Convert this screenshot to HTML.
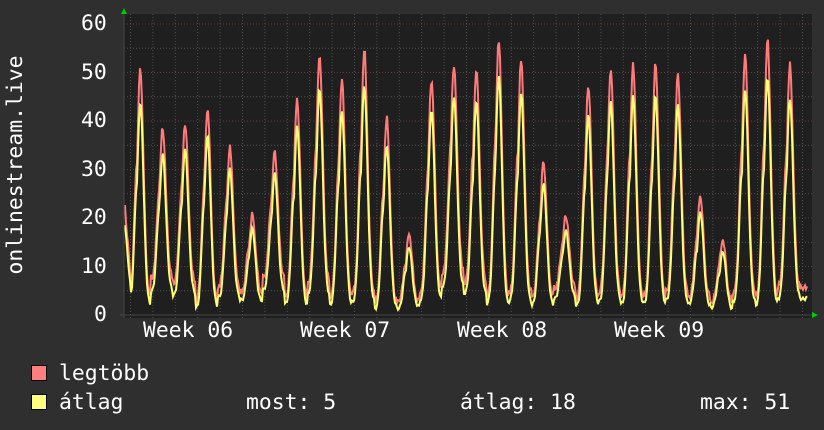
<!DOCTYPE html>
<html><head><meta charset="utf-8"><style>
html,body{margin:0;padding:0;background:#2f2f2f;}
body{width:824px;height:430px;overflow:hidden;position:relative;font-family:"DejaVu Sans Mono","Liberation Mono",monospace;color:#fff;}
.t{position:absolute;font-size:21.4px;line-height:22px;white-space:pre;}
.sq{position:absolute;width:14px;height:14px;border:1px solid #000;}
</style></head><body>
<svg id="g" width="824" height="430" style="position:absolute;left:0;top:0">
<rect x="124" y="14" width="688" height="304" fill="#1f1f1f"/>
<g id="grid"></g>
<polyline id="red" fill="none" stroke="#ff7b7b" stroke-width="2"/>
<polyline id="yel" fill="none" stroke="#ffff70" stroke-width="2"/>
<line x1="124" y1="10" x2="124" y2="318" stroke="#444" stroke-width="1"/>
<line x1="120" y1="315" x2="814" y2="315" stroke="#444" stroke-width="1"/>
<polygon points="121,14 127,14 124,8" fill="#0c0"/>
<polygon points="812,312 812,318 818,315" fill="#0c0"/>
</svg>
<div class="t" style="left:81px;top:13px">60</div>
<div class="t" style="left:81px;top:62px">50</div>
<div class="t" style="left:81px;top:110px">40</div>
<div class="t" style="left:81px;top:159px">30</div>
<div class="t" style="left:81px;top:207px">20</div>
<div class="t" style="left:81px;top:256px">10</div>
<div class="t" style="left:94px;top:304px">0</div>
<div class="t" style="left:-99px;top:154px;transform:rotate(-90deg);width:230px;text-align:center">onlinestream.live</div>
<div class="t" style="left:143px;top:320px">Week 06</div>
<div class="t" style="left:300px;top:320px">Week 07</div>
<div class="t" style="left:457px;top:320px">Week 08</div>
<div class="t" style="left:614px;top:320px">Week 09</div>
<div class="sq" style="left:31px;top:365px;background:#ff7f7f"></div>
<div class="sq" style="left:31px;top:394px;background:#ffff7f"></div>
<div class="t" style="left:59px;top:363px">legtöbb</div>
<div class="t" style="left:59px;top:392px">átlag</div>
<div class="t" style="left:246px;top:392px">most: 5</div>
<div class="t" style="left:460px;top:392px">átlag: 18</div>
<div class="t" style="left:700px;top:392px">max: 51</div>
<script>
var NS="http://www.w3.org/2000/svg",g=document.getElementById("grid");
function ln(x1,y1,x2,y2,c){var l=document.createElementNS(NS,"line");l.setAttribute("x1",x1);l.setAttribute("y1",y1);l.setAttribute("x2",x2);l.setAttribute("y2",y2);l.setAttribute("stroke",c);l.setAttribute("stroke-dasharray","1,2");g.appendChild(l);}
function Y(v){return 315-v*4.85;}
for(var v=5;v<=60;v+=5){ln(124,Y(v),812,Y(v),v%10?"#505050":"#6a3a3a");}
for(var x=130.5;x<812;x+=22.4){ln(x,14,x,318,"#505050");}
var peaks=[50,38,39,42,34,20,33,44,53,48,54,40,16,48,51,50,56,52,31,20,47,50,51,51,49,24,15,53,56,51];
var mins=[3,7,6,2,5,4,7,3,6,3,4,2,2,4,8,6,3,4,3,5,3,4,3,3,4,3,2,4,3,5];
var r=[],y=[];
for(var x=125;x<=807;x++){
 var d=(x-128)/22.4, i=Math.floor(d), ph=d-i, k;
 if(i<0){i=0;ph=0;}
 var p,m;
 if(i>=peaks.length){p=5;m=5;k=0;}
 else{
 p=peaks[i];m=mins[i];
 var f=Math.exp(-Math.pow((ph-0.55)/0.2,2));
 var s=0.6*Math.exp(-Math.pow((ph-0.4)/0.16,2));
 k=Math.max(f,s);}
 if(x<132)k=Math.max(k,0.4*(132-x)/7);
 var noise=Math.sin(x*1.7)*0.8+Math.sin(x*0.53)*0.6;
 var vr=m+(p-m)*k+Math.abs(noise);
 var vy=m*0.7+(p*0.88-m*0.7)*k+noise*0.4;
 r.push(x+","+Y(vr).toFixed(1));y.push(x+","+Y(Math.max(vy,0.5)).toFixed(1));
}
document.getElementById("red").setAttribute("points",r.join(" "));
document.getElementById("yel").setAttribute("points",y.join(" "));
</script>
</body></html>
